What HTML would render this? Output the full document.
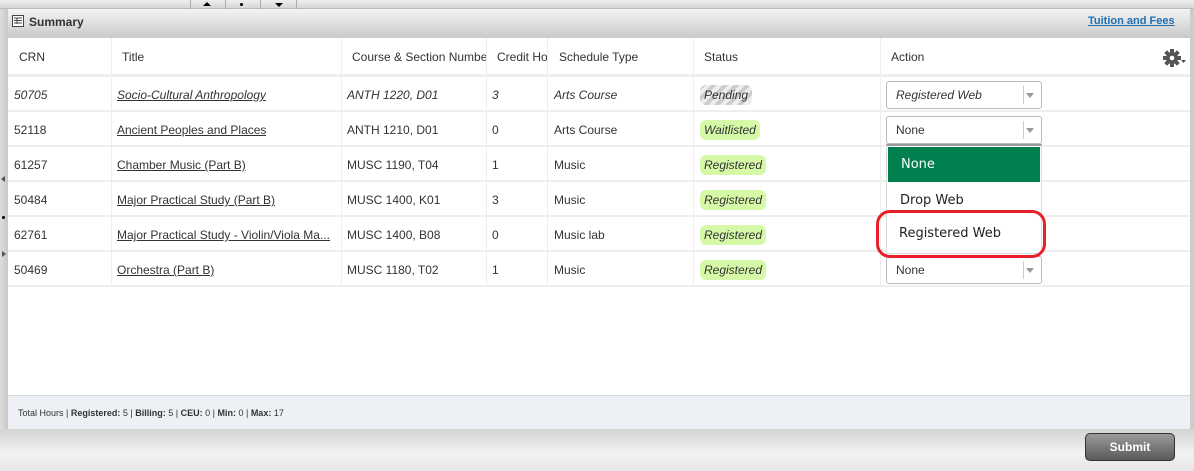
<!DOCTYPE html>
<html><head><style>
*{margin:0;padding:0;box-sizing:border-box}
body{width:1194px;height:471px;background:#fff;font-family:"Liberation Sans",sans-serif;font-size:12px;color:#333;position:relative;overflow:hidden}
.abs{position:absolute}
.leftbar{left:0;top:0;width:8px;height:471px;background:linear-gradient(90deg,#ddd,#c8c8c8)}
.topstrip{left:0;top:0;width:1194px;height:9px;background:linear-gradient(#eee,#d6d6d6);border-bottom:1px solid #bbb}
.hdr{left:8px;top:9px;width:1184px;height:29px;background:linear-gradient(#f4f4f4,#c9c9c9)}
.rightedge{left:1190px;top:9px;width:4px;height:420px;background:#ccc}
.row{position:absolute;left:8px;width:1182px;border-bottom:2px solid #eee;height:35px}
.cell{position:absolute;top:1px;height:100%;line-height:35px;padding-left:6px;white-space:nowrap;overflow:hidden}
.v{position:absolute;top:38px;width:1px;height:249px;background:#eee}
.badge{display:inline-block;line-height:20px;padding:0 4px;border-radius:6px;background:#d6f9a8;font-style:italic;color:#333}
.sel{position:absolute;left:886px;width:156px;height:28px;border:1px solid #bbb;border-radius:3px;background:#fff;line-height:26px;padding-left:9px}
.sel:after{content:"";position:absolute;left:136px;top:4px;width:1px;height:18px;background:#ccc}
.sel b{position:absolute;right:7px;top:11px;border:4px solid transparent;border-top:5px solid #999;border-bottom:0}
u{color:#333}
</style></head><body>
<div class="abs leftbar"></div>
<div class="abs topstrip"></div>
<div class="abs" style="left:190px;top:0;width:108px;height:9px">
<div class="abs" style="left:0;top:0;width:1px;height:9px;background:#aaa"></div>
<div class="abs" style="left:35px;top:0;width:1px;height:9px;background:#aaa"></div>
<div class="abs" style="left:70px;top:0;width:1px;height:9px;background:#aaa"></div>
<div class="abs" style="left:106px;top:0;width:1px;height:9px;background:#aaa"></div>
<div class="abs" style="left:13px;top:2px;border:4px solid transparent;border-bottom:4px solid #000;border-top:0"></div>
<div class="abs" style="left:50px;top:3px;width:3px;height:3px;background:#000;border-radius:50%"></div>
<div class="abs" style="left:85px;top:3px;border:4px solid transparent;border-top:4px solid #000;border-bottom:0"></div>
</div>
<div class="abs" style="left:1px;top:176px;border:3px solid transparent;border-right:4px solid #555;border-left:0"></div>
<div class="abs" style="left:2px;top:216px;width:3px;height:3px;background:#000;border-radius:50%"></div>
<div class="abs" style="left:2px;top:251px;border:3px solid transparent;border-left:4px solid #555;border-right:0"></div>
<div class="abs hdr"></div>
<div class="abs rightedge"></div>
<svg class="abs" style="left:12px;top:15px" width="12" height="12" viewBox="0 0 12 12"><rect x=".5" y=".5" width="11" height="11" fill="#fff" stroke="#444"/><path d="M2 3h8M2 5.5h8M2 8h8M5 3v6" stroke="#444"/></svg>
<div class="abs" style="left:29px;top:15px;font-weight:bold;font-size:12px;color:#333">Summary</div>
<div class="abs" style="left:1088px;top:15px;font-weight:bold;font-size:11px;color:#1f6fb2;text-decoration:underline">Tuition and Fees</div>

<div class="row" style="top:38px;height:39px;border-bottom:3px solid #eee">
<div class="cell" style="left:5px;line-height:37px">CRN</div>
<div class="cell" style="left:108px;line-height:37px">Title</div>
<div class="cell" style="left:338px;width:142px;line-height:37px">Course &amp; Section Number</div>
<div class="cell" style="left:483px;width:57px;line-height:37px">Credit Hours</div>
<div class="cell" style="left:545px;line-height:37px">Schedule Type</div>
<div class="cell" style="left:690px;line-height:37px">Status</div>
<div class="cell" style="left:877px;line-height:37px">Action</div>
</div>
<svg class="abs" style="left:1162px;top:48px" width="26" height="20" viewBox="0 0 26 20"><g transform="translate(10,10)" fill="#555"><circle r="6"/><g id="t"><rect x="-2" y="-9" width="4" height="18"/></g><use href="#t" transform="rotate(45)"/><use href="#t" transform="rotate(90)"/><use href="#t" transform="rotate(135)"/><circle r="2.3" fill="#fff"/></g><path d="M19 12h5l-2.5 3z" fill="#555"/></svg>

<div class="row" style="top:77px;font-style:italic"><div class="cell" style="left:0">50705</div><div class="cell" style="left:103px"><u>Socio-Cultural Anthropology</u></div><div class="cell" style="left:333px">ANTH 1220, D01</div><div class="cell" style="left:478px">3</div><div class="cell" style="left:540px">Arts Course</div><div class="cell" style="left:686px"><span class="badge" style="background:repeating-linear-gradient(135deg,#ccc 0 4px,#eee 4px 8px)">Pending</span></div></div>
<div class="row" style="top:112px"><div class="cell" style="left:0">52118</div><div class="cell" style="left:103px"><u>Ancient Peoples and Places</u></div><div class="cell" style="left:333px">ANTH 1210, D01</div><div class="cell" style="left:478px">0</div><div class="cell" style="left:540px">Arts Course</div><div class="cell" style="left:686px"><span class="badge">Waitlisted</span></div></div>
<div class="row" style="top:147px"><div class="cell" style="left:0">61257</div><div class="cell" style="left:103px"><u>Chamber Music (Part B)</u></div><div class="cell" style="left:333px">MUSC 1190, T04</div><div class="cell" style="left:478px">1</div><div class="cell" style="left:540px">Music</div><div class="cell" style="left:686px"><span class="badge">Registered</span></div></div>
<div class="row" style="top:182px"><div class="cell" style="left:0">50484</div><div class="cell" style="left:103px"><u>Major Practical Study (Part B)</u></div><div class="cell" style="left:333px">MUSC 1400, K01</div><div class="cell" style="left:478px">3</div><div class="cell" style="left:540px">Music</div><div class="cell" style="left:686px"><span class="badge">Registered</span></div></div>
<div class="row" style="top:217px"><div class="cell" style="left:0">62761</div><div class="cell" style="left:103px;width:228px"><u>Major Practical Study - Violin/Viola Ma...</u></div><div class="cell" style="left:333px">MUSC 1400, B08</div><div class="cell" style="left:478px">0</div><div class="cell" style="left:540px">Music lab</div><div class="cell" style="left:686px"><span class="badge">Registered</span></div></div>
<div class="row" style="top:252px"><div class="cell" style="left:0">50469</div><div class="cell" style="left:103px"><u>Orchestra (Part B)</u></div><div class="cell" style="left:333px">MUSC 1180, T02</div><div class="cell" style="left:478px">1</div><div class="cell" style="left:540px">Music</div><div class="cell" style="left:686px"><span class="badge">Registered</span></div></div>
<div class="v" style="left:111px"></div><div class="v" style="left:341px"></div><div class="v" style="left:486px"></div><div class="v" style="left:547px"></div><div class="v" style="left:693px"></div><div class="v" style="left:880px"></div>

<div class="sel" style="top:81px;font-style:italic">Registered Web<b></b></div>
<div class="sel" style="top:116px">None<b></b></div>
<div class="sel" style="top:256px">None<b></b></div>

<div class="abs" style="left:886px;top:144px;width:156px;height:110px;background:#fff;border:1px solid #ddd;border-top:2px solid #999;font-family:'DejaVu Sans',sans-serif;font-size:13px;color:#222">
<div style="margin:1px;height:35px;background:#007f4f;color:#fff;line-height:35px;padding-left:13px">None</div>
<div style="line-height:36px;padding-left:13px">Drop Web</div>
<div style="line-height:30px;padding-left:12px">Registered Web</div>
</div>
<div class="abs" style="left:876px;top:210px;width:170px;height:48px;border:3px solid #e8202a;border-radius:14px"></div>

<div class="abs" style="left:8px;top:395px;width:1182px;height:34px;background:#edf0f4;border-top:1px solid #d5d8dc;font-size:9px;line-height:34px;padding-left:10px;color:#333">Total Hours | <b>Registered:</b> 5 | <b>Billing:</b> 5 | <b>CEU:</b> 0 | <b>Min:</b> 0 | <b>Max:</b> 17</div>
<div class="abs" style="left:0;top:429px;width:1194px;height:42px;background:linear-gradient(#d4d4d4,#f2f2f2 60%,#e6e6e6)"></div>
<div class="abs" style="left:1085px;top:433px;width:90px;height:28px;border:1px solid #333;border-radius:5px;background:linear-gradient(#9a9a9a,#5a5a5a);color:#fff;font-weight:bold;font-size:12px;text-align:center;line-height:26px">Submit</div>
</body></html>
